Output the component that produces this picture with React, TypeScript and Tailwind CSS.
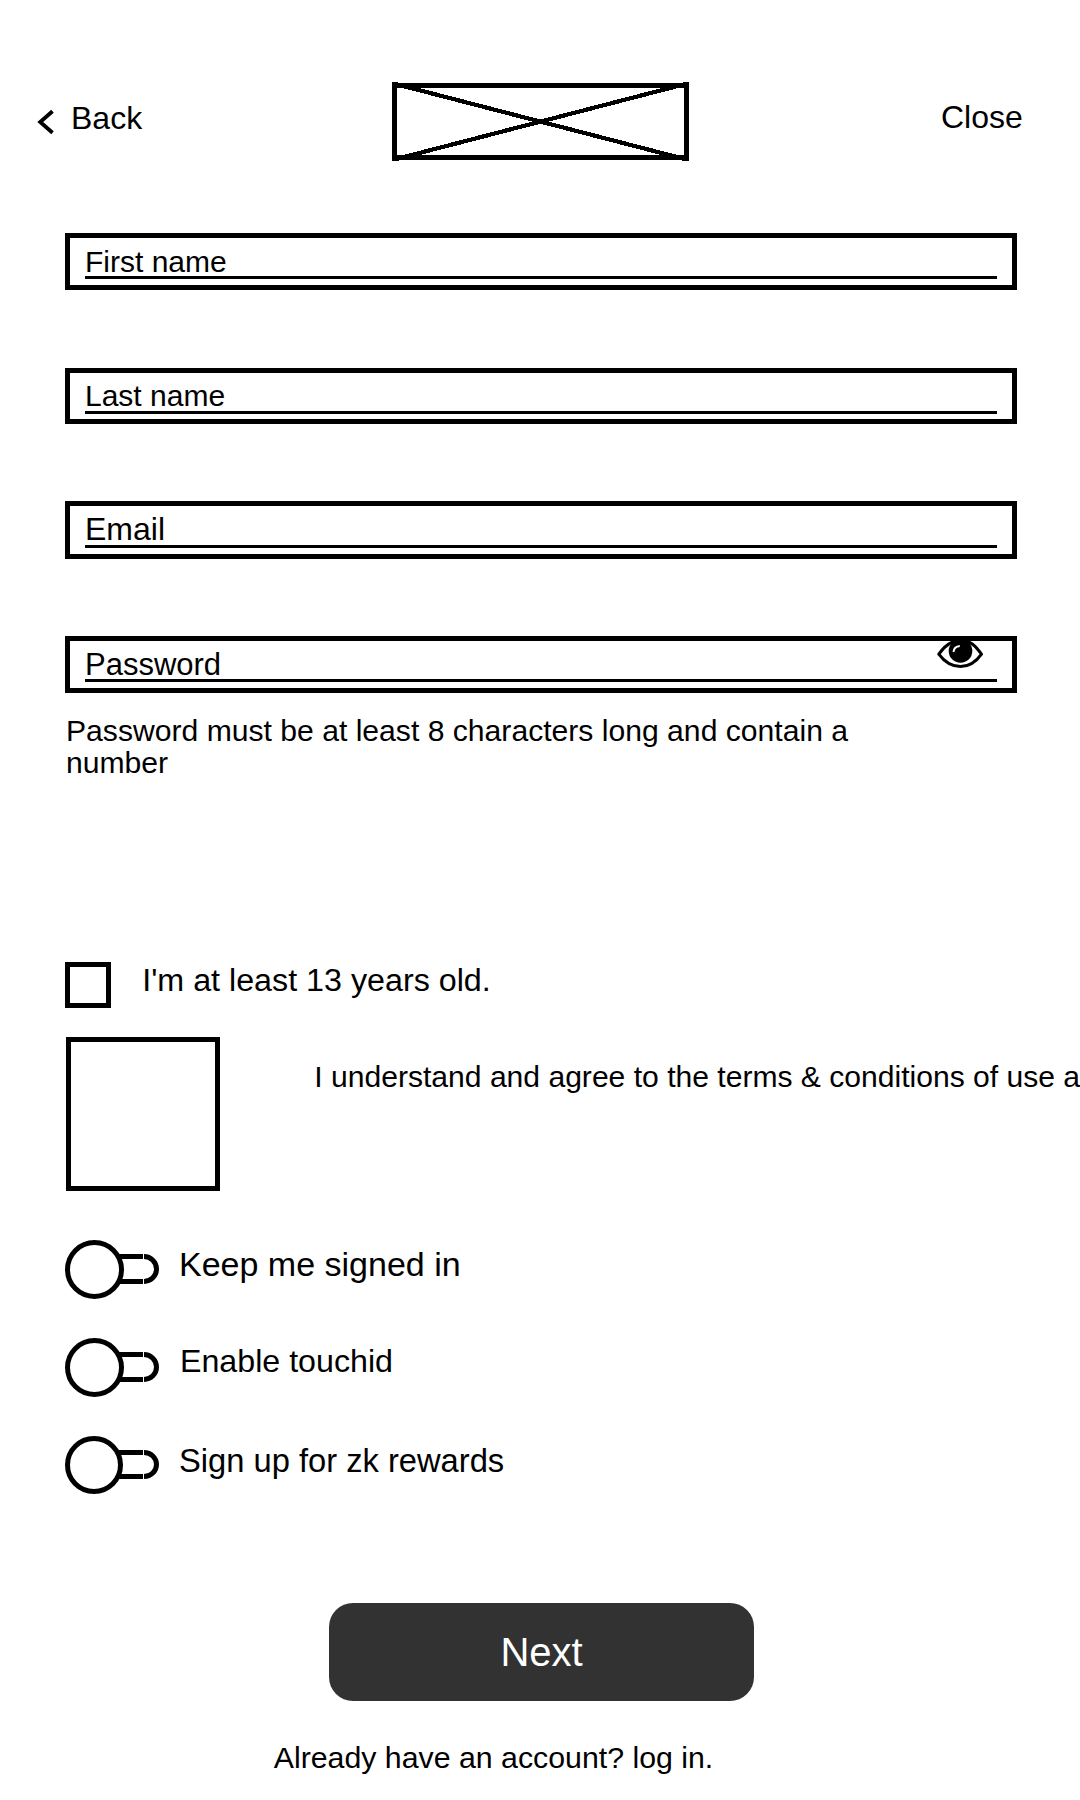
import type { ReactNode } from 'react';

type FieldProps = {
  label: string;
  box: string;
  text: string;
  children?: ReactNode;
};

function Field({ label, box, text, children }: FieldProps) {
  return (
    <div className={`relative ml-[65px] w-[952px] border-5 border-black ${box}`}>
      <div className={`ml-[15px] box-content w-[912px] border-b-3 border-black whitespace-nowrap ${text}`}>
        <span className="block">{label}</span>
      </div>
      {children}
    </div>
  );
}

function Logo() {
  return (
    <svg width="297" height="81" viewBox="0 0 297 81" className="mt-[81px] ml-[250px] shrink-0" shapeRendering="crispEdges">
      <rect x="0" y="1" width="5" height="79" />
      <rect x="292" y="1" width="5" height="79" />
      <rect x="0" y="2" width="297" height="5" />
      <rect x="0" y="74" width="297" height="5" />
      <path d="M5 3.4L292 77.8M292 3.4L5 77.8" stroke="#000" strokeWidth="4.2" fill="none" />
    </svg>
  );
}

function Eye() {
  return (
    <svg width="50" height="30" viewBox="0 0 50 30" className="absolute top-0 left-[865px]">
      <path
        d="M3.8 13.2C9 5.5 15 -0.5 25.500 -0.5S41 5.5 46.5 13.200C41 21 34 25.6 25.5 25.6S9.5 21 3.8 13.2Z"
        fill="none"
        stroke="#000"
        strokeWidth="3"
        strokeLinejoin="round"
      />
      <circle cx="25.5" cy="10" r="11.800" />
      <path d="M18.5 11C18.8 7.5 21 5.3 24.8 5" fill="none" stroke="#fff" strokeWidth="2" />
    </svg>
  );
}

type ToggleProps = { label: string; row: string; text: string; d: number; th: number };

function Toggle({ label, row, text, d, th }: ToggleProps) {
  const r = th / 2 - 2.5;
  const top = 16.5;
  return (
    <div className={`ml-[65px] flex items-start ${row}`}>
      <svg width="95" height="59" viewBox="0 0 95 59" className="shrink-0">
        <path
          d={`M54 ${top}H78M54 ${top + 2 * r}H78M79 ${top}a12.5 ${r} 0 0 1 0 ${2 * r}`}
          fill="none"
          stroke="#000"
          strokeWidth="5"
        />
        <circle cx={d / 2} cy={d / 2} r={d / 2 - 2.5} fill="#fff" stroke="#000" strokeWidth="5" />
      </svg>
      <span className={`whitespace-nowrap ${text}`}>{label}</span>
    </div>
  );
}

export default function App() {
  return (
    <main
      className="flex h-[1800px] w-[1080px] flex-col overflow-hidden bg-white text-black"
      style={{ fontFamily: '"Liberation Sans", Arial, sans-serif' }}
    >
      <header className="flex h-[233px] shrink-0 items-start">
        <svg width="18" height="28" viewBox="0 0 18 28" className="mt-[108px] ml-[37px] shrink-0">
          <path d="M15.5 3.2L3.2 14L15.5 24.8" fill="none" stroke="#000" strokeWidth="3.8" />
        </svg>
        <span className="mt-[100px] ml-[16px] w-[71px] text-[32px] leading-[36px]">Back</span>
        <Logo />
        <span className="mt-[99px] ml-[252px] text-[32px] leading-[36px]">Close</span>
      </header>

      <Field label="First name" box="h-[57px] pt-[7px]" text="h-[31px] text-[30px] leading-[33px]" />
      <Field label="Last name" box="mt-[78px] h-[56px] pt-[6px]" text="h-[32px] text-[30px] leading-[33px]" />
      <Field label="Email" box="mt-[77px] h-[58px] pt-[5px]" text="h-[34px] text-[32px] leading-[36px]" />
      <Field label="Password" box="mt-[77px] h-[57px] pt-[6px]" text="h-[32px] text-[31px] leading-[35px]">
        <Eye />
      </Field>

      <p className="mt-[22px] ml-[66px] h-[64px] w-[800px] text-[30.14px] leading-[32px]">
        Password must be at least 8 characters long and contain a number
      </p>

      <div className="mt-[183px] ml-[65px] flex h-[46px] items-start">
        <div className="size-[46px] border-5 border-black" />
        <span className="ml-[31.2px] text-[32.25px] leading-[36px]">I'm at least 13 years old.</span>
      </div>

      <div className="mt-[29px] ml-[66px] flex h-[154px] items-start">
        <div className="size-[154px] shrink-0 border-5 border-black" />
        <span className="mt-[23px] ml-[94.3px] text-[30.08px] leading-[33px] whitespace-nowrap">
          I understand and agree to the terms &amp; conditions of use a
        </span>
      </div>

      <Toggle label="Keep me signed in" row="mt-[49px] h-[59px]" text="mt-[5px] ml-[19px] text-[34px] leading-[38px]" d={59} th={30} />
      <Toggle label="Enable touchid" row="mt-[39px] h-[59px]" text="mt-[5px] ml-[20px] text-[32.2px] leading-[36px]" d={59} th={30} />
      <Toggle label="Sign up for zk rewards" row="mt-[39px] h-[59px]" text="mt-[6px] ml-[19px] text-[32.7px] leading-[37px]" d={58} th={29} />

      <button className="mt-[108px] ml-[329px] flex h-[98px] w-[425px] shrink-0 items-start justify-center rounded-3xl bg-[#323232] pt-[27px] text-[40px] leading-[45px] text-white">
        Next
      </button>
      <p className="mt-[40px] ml-[273.7px] text-[30.3px] leading-[33px]">Already have an account? log in.</p>
    </main>
  );
}
